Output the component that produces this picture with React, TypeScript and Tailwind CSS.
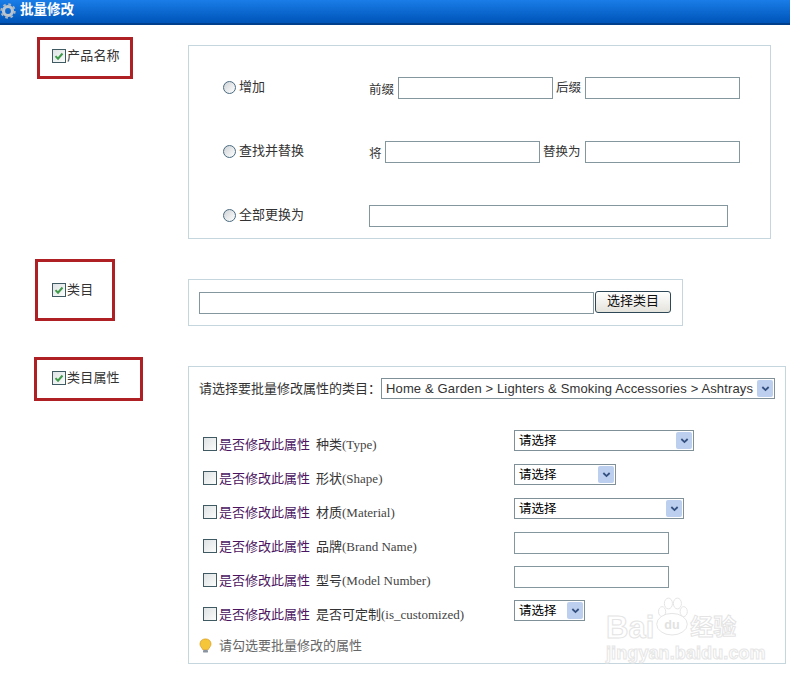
import React from 'react';

const cjk = "font-['Liberation_Sans','Noto_Sans_CJK_SC',sans-serif]";

function Check({ checked = false }: { checked?: boolean }) {
  return (
    <span className="flex h-[14px] w-[14px] shrink-0 items-center justify-center border border-[#3f5a63] bg-gradient-to-br from-[#dfe3e3] to-[#fbfcfc]">
      {checked && (
        <svg viewBox="0 0 12 12" className="h-[10px] w-[10px]">
          <path d="M1.8 6.2 L4.8 9.2 L10.2 3" fill="none" stroke="#3f9a4a" strokeWidth="2.4" />
        </svg>
      )}
    </span>
  );
}

function Radio() {
  return <span className="h-[13px] w-[13px] shrink-0 rounded-full border border-[#4a6a80] bg-gradient-to-br from-[#cfd3d6] to-[#ffffff]" />;
}

function TextBox({ width }: { width: string }) {
  return <input type="text" className={`h-[22px] shrink-0 border border-[#84979f] bg-white ${width}`} />;
}

function Select({ width, text, big = false }: { width: string; text: string; big?: boolean }) {
  return (
    <div className={`flex h-[21px] shrink-0 items-center justify-between border border-[#7f9099] bg-white pl-[4px] pr-[1px] ${width}`}>
      <span className={`whitespace-nowrap ${big ? 'text-[13px] tracking-[0.14px] text-[#333]' : 'pt-[1px] text-[12.5px] text-black'}`}>{text}</span>
      <span className="flex h-[17px] w-[16px] shrink-0 items-center justify-center rounded-[2px] bg-[#bccfef]">
        <svg viewBox="0 0 10 8" className="h-[8px] w-[9px]">
          <path d="M1.5 1.8 L5 5.2 L8.5 1.8" fill="none" stroke="#33507f" strokeWidth="2" />
        </svg>
      </span>
    </div>
  );
}

function RedLabel({ label, size }: { label: string; size: string }) {
  return (
    <div className={`flex items-center border-[3px] border-[#ae2024] text-[13px] text-[#333] ${size}`}>
      <Check checked />
      <span className="ml-[1px] tracking-[0.2px]">{label}</span>
    </div>
  );
}

const attrs = [
  { zh: '种类', en: '(Type)', select: { w: 'w-[180px]' } },
  { zh: '形状', en: '(Shape)', select: { w: 'w-[102px]' } },
  { zh: '材质', en: '(Material)', select: { w: 'w-[170px]' } },
  { zh: '品牌', en: '(Brand Name)' },
  { zh: '型号', en: '(Model Number)' },
  { zh: '是否可定制', en: '(is_customized)', select: { w: 'w-[71px]' } },
];

export default function App() {
  return (
    <div className={`relative h-[676px] w-[790px] overflow-hidden bg-white ${cjk}`}>
      <div className="flex h-[25px] items-center border-b-2 border-[#003f8c] bg-gradient-to-b from-[#1a7de8] to-[#0054b8] pb-[2px]">
        <svg viewBox="0 0 16 16" className="h-[16px] w-[16px] shrink-0">
          <circle cx="8" cy="8" r="4.5" fill="none" stroke="#b9c4cf" strokeWidth="3.2" />
          <circle cx="8" cy="8" r="6.6" fill="none" stroke="#aab6c2" strokeWidth="2.2" strokeDasharray="2.6 2.6" />
        </svg>
        <span className="ml-[4px] text-[13.5px] font-bold text-white">批量修改</span>
      </div>

      {/* 产品名称 */}
      <div className="mt-[12px] flex items-start">
        <div className="w-[188px] shrink-0 pl-[37px]">
          <RedLabel label="产品名称" size="h-[42px] w-[96px] pl-[12px] pb-[5px]" />
        </div>
        <div className="mt-[8px] h-[194px] w-[583px] border border-[#c5d6de] pt-[31px] text-[12.5px] text-[#333]">
          <div className="flex h-[22px] items-center">
            <label className="flex w-[180px] items-center gap-[3px] pb-[2px] pl-[34px] text-[13px]"><Radio />增加</label>
            <span className="w-[29px] pt-[4px]">前缀</span>
            <TextBox width="w-[155px]" />
            <span className="ml-[3px] w-[29px] pt-[1px]">后缀</span>
            <TextBox width="w-[155px]" />
          </div>
          <div className="mt-[42px] flex h-[22px] items-center">
            <label className="flex w-[180px] items-center gap-[3px] pb-[2px] pl-[34px] text-[13px]"><Radio />查找并替换</label>
            <span className="w-[16px] pt-[4px]">将</span>
            <TextBox width="w-[155px]" />
            <span className="ml-[3px] w-[42px] pt-[1px]">替换为</span>
            <TextBox width="w-[155px]" />
          </div>
          <div className="mt-[42px] flex h-[22px] items-center">
            <label className="flex w-[180px] items-center gap-[3px] pb-[2px] pl-[34px] text-[13px]"><Radio />全部更换为</label>
            <TextBox width="w-[359px]" />
          </div>
        </div>
      </div>

      {/* 类目 */}
      <div className="mt-[20px] flex items-start">
        <div className="w-[188px] shrink-0 pl-[35px]">
          <RedLabel label="类目" size="h-[62px] w-[80px] pl-[14px]" />
        </div>
        <div className="mt-[20px] flex h-[47px] w-[495px] items-start border border-[#c5d6de] pl-[10px] pt-[12px]">
          <TextBox width="w-[395px]" />
          <button className="ml-[1px] mt-[-1px] h-[22px] w-[76px] rounded-[3px] border border-[#2f4858] bg-gradient-to-b from-[#ffffff] to-[#e4e3dc] pb-[4px] text-[13px] leading-none text-[#111]">
            选择类目
          </button>
        </div>
      </div>

      {/* 类目属性 */}
      <div className="mt-[31px] flex items-start">
        <div className="w-[188px] shrink-0 pl-[34px]">
          <RedLabel label="类目属性" size="h-[44px] w-[109px] pl-[15px] pb-[3px]" />
        </div>
        <div className="mt-[9px] h-[298px] w-[598px] border border-[#c5d6de] pl-[10px] pt-[11px]">
          <div className="flex h-[21px] items-center">
            <span className="w-[182px] whitespace-nowrap pt-[1px] text-[13px] text-[#333]">请选择要批量修改属性的类目：</span>
            <Select big width="w-[394px]" text="Home & Garden > Lighters & Smoking Accessories > Ashtrays" />
          </div>
          <div className="mt-[31px] flex flex-col gap-[13px]">
            {attrs.map((a) => (
              <div key={a.en} className="flex h-[21px] items-center">
                <div className="flex w-[315px] shrink-0 items-center pl-[4px] pt-[7px] text-[13px] text-[#333]">
                  <Check />
                  <span className="ml-[2px] pt-[1px] text-[#4a1460]">是否修改此属性</span>
                  <span className="ml-[6px] pt-[1px]">{a.zh}</span>
                  <span className="pt-[2px] font-['Liberation_Serif',serif] text-[13px] text-[#444]">{a.en}</span>
                </div>
                {a.select ? <Select width={a.select.w} text="请选择" /> : <TextBox width="w-[155px]" />}
              </div>
            ))}
          </div>
          <div className="mt-[15px] flex items-center text-[13px] text-[#666]">
            <svg viewBox="0 0 16 18" className="ml-[-1px] h-[16px] w-[15px] shrink-0">
              <path d="M8 1 C4 1 1.8 3.8 1.8 6.8 C1.8 9.5 4 10.6 4.8 13 L11.2 13 C12 10.6 14.2 9.5 14.2 6.8 C14.2 3.8 12 1 8 1 Z" fill="#f6c63a" stroke="#d89a1c" strokeWidth="0.8" />
              <rect x="5.2" y="13.4" width="5.6" height="3" rx="1" fill="#8a94a0" />
            </svg>
            <span className="ml-[6px]">请勾选要批量修改的属性</span>
          </div>
        </div>
      </div>

      {/* watermark */}
      <div className="pointer-events-none absolute left-[606px] top-[590px] w-[145px] text-white">
        <div className="flex items-center font-['Liberation_Sans',sans-serif] text-[31px] font-bold leading-none [-webkit-text-stroke:1px_#e4e4e4]">
          <span className="mt-[22px]">Bai</span>
          <svg viewBox="0 0 40 44" className="h-[46px] w-[36px] shrink-0">
            <g fill="#fff" stroke="#e2e2e2" strokeWidth="1">
              <ellipse cx="9" cy="16" rx="4" ry="5.5" />
              <ellipse cx="16" cy="7" rx="4.5" ry="6" />
              <ellipse cx="26" cy="7" rx="4.5" ry="6" />
              <ellipse cx="33" cy="16" rx="4" ry="5.5" />
              <ellipse cx="20" cy="30" rx="17" ry="12" />
            </g>
            <text x="20" y="35" textAnchor="middle" fontSize="14" fontWeight="700" fill="#e2e2e2">du</text>
          </svg>
          <span className={`mt-[22px] text-[23px] [-webkit-text-stroke:1px_#e4e4e4] ${cjk}`}>经验</span>
        </div>
        <div className="mt-[1px] whitespace-nowrap font-['Liberation_Sans',sans-serif] text-[18px] font-bold leading-none tracking-[0.1px] [-webkit-text-stroke:1px_#e6e6e6]">jingyan.baidu.com</div>
      </div>
    </div>
  );
}
